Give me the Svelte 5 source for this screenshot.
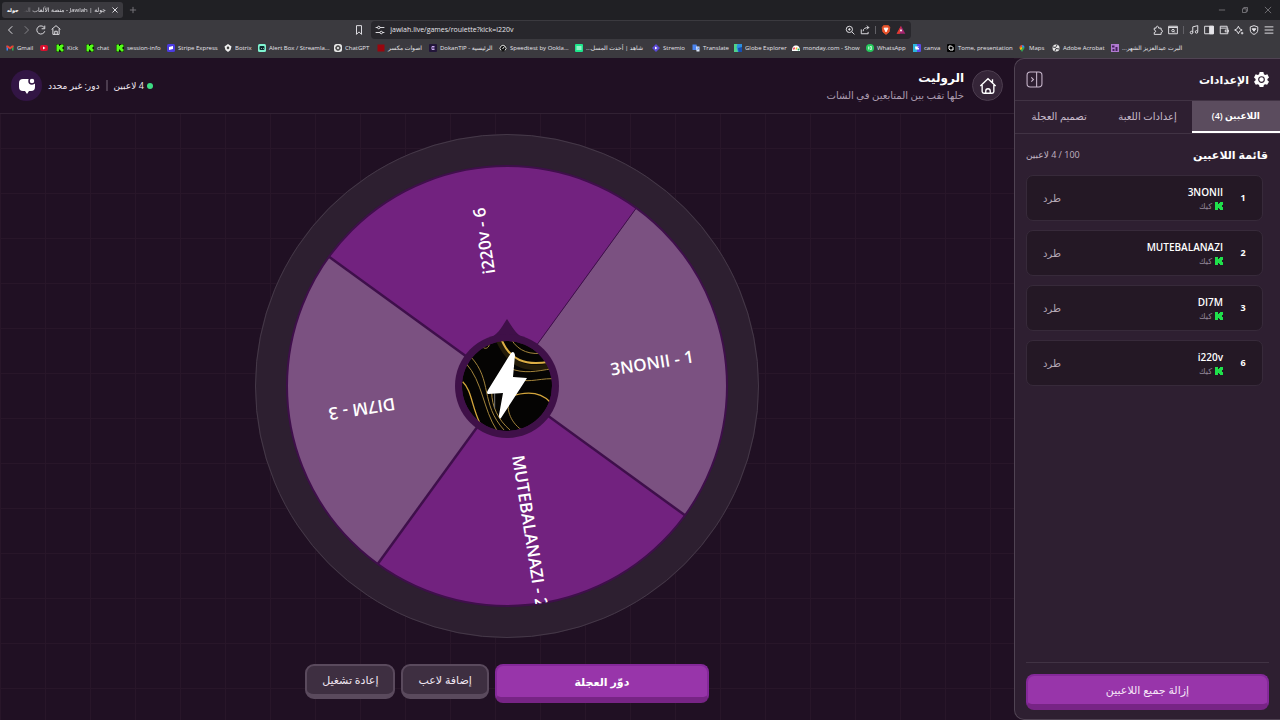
<script lang="ts">
	interface Bookmark {
		label: string;
		icon: string;
		color: string;
		width: number;
		rtl?: boolean;
	}

	const bookmarks: Bookmark[] = [
		{ label: 'Gmail', icon: 'gmail', color: '#e94235', width: 34 },
		{ label: '', icon: 'play', color: '#d8102e', width: 16 },
		{ label: 'Kick', icon: 'kick', color: '#53fc18', width: 30 },
		{ label: 'chat', icon: 'kick', color: '#53fc18', width: 30 },
		{ label: 'session-info', icon: 'kick', color: '#53fc18', width: 51 },
		{ label: 'Stripe Express', icon: 'stripe', color: '#4b3be0', width: 57 },
		{ label: 'Botrix', icon: 'diamond', color: '#f0f0f0', width: 34 },
		{ label: 'Alert Box / Streamla...', icon: 'box', color: '#80f5d2', width: 76 },
		{ label: 'ChatGPT', icon: 'gpt', color: '#e8e8e8', width: 43 },
		{ label: 'اصوات مكسر', icon: 'square', color: '#98060e', width: 52 },
		{ label: 'DokanTIP - الرئيسية', icon: 'dokan', color: '#23163a', width: 70 },
		{ label: 'Speedtest by Ookla...', icon: 'gauge', color: '#e0e0e0', width: 76 },
		{ label: 'شاهد | أحدث المسل...', icon: 'lines', color: '#1ee68c', width: 77, rtl: true },
		{ label: 'Stremio', icon: 'stremio', color: '#5b49d6', width: 40 },
		{ label: 'Translate', icon: 'translate', color: '#4a83ee', width: 42 },
		{ label: 'Globe Explorer', icon: 'globe', color: '#2c8fe0', width: 58 },
		{ label: 'monday.com - Show', icon: 'monday', color: '#ffffff', width: 74 },
		{ label: 'WhatsApp', icon: 'dot', color: '#25c95c', width: 47 },
		{ label: 'canva', icon: 'canva', color: '#5a4be8', width: 34 },
		{ label: 'Tome, presentation', icon: 'tome', color: '#000000', width: 71 },
		{ label: 'Maps', icon: 'pin', color: '#34a853', width: 34 },
		{ label: 'Adobe Acrobat', icon: 'acrobat', color: '#e6e6e6', width: 59 },
		{ label: 'البرت عبدالعزيز الشهر...', icon: 'photo', color: '#b07ad0', width: 72, rtl: true }
	];

	const players = [
		{ id: 1, name: '3NONII' },
		{ id: 2, name: 'MUTEBALANAZI' },
		{ id: 3, name: 'DI7M' },
		{ id: 6, name: 'i220v' }
	];
	const maxPlayers = 100;

	const tabs = [`اللاعبين (${players.length})`, 'إعدادات اللعبة', 'تصميم العجلة'];
	let activeTab = $state(0);

	// wheel geometry
	const radius = 220;
	const labelRadius = 147;
	const rotation = -54;
	const step = 360 / players.length;
	const colors = ['#7b5181', '#72227f'];

	function point(deg: number) {
		const rad = (deg * Math.PI) / 180;
		return `${(radius * Math.cos(rad)).toFixed(2)} ${(radius * Math.sin(rad)).toFixed(2)}`;
	}

	const slices = players.map((player, i) => {
		const start = rotation + i * step;
		return {
			path: `M0 0L${point(start)}A${radius} ${radius} 0 0 1 ${point(start + step)}Z`,
			color: colors[i % 2],
			edge: point(start),
			angle: start + step / 2,
			label: `${player.name} - ${player.id}`
		};
	});
</script>

{#snippet kick()}
	<svg class="kick" viewBox="0 0 8 8" aria-hidden="true">
		<path d="M0 0h3v2h1V1h1V0h3v3H7v2h1v3H5V7H4V6H3v2H0z" fill="#1fe04b" />
	</svg>
{/snippet}

{#snippet favicon(icon: string, color: string)}
	<svg class="favicon" viewBox="0 0 16 16" aria-hidden="true">
		{#if icon === 'gmail'}
			<path d="M1 3v10h3V7z" fill="#4285f4" /><path d="M15 3v10h-3V7z" fill="#34a853" />
			<path d="M1 3h3l4 3 4-3h3v3l-7 5-7-5z" fill={color} />
		{:else if icon === 'play'}
			<rect y="2" width="16" height="12" rx="4" fill={color} /><path d="M6 5l5 3-5 3z" fill="#fff" />
		{:else if icon === 'kick'}
			<rect width="16" height="16" fill="#0d1a08" />
			<path d="M1 1h5v3h2V2h2V1h5v5h-2v4h2v5h-5v-2H8v-2H6v4H1z" fill={color} />
		{:else if icon === 'stripe'}
			<rect width="16" height="16" rx="3" fill={color} /><path d="M4 6l8-2v6l-8 2z" fill="#fff" />
		{:else if icon === 'diamond'}
			<path d="M8 0l7 5-2 7-5 4-5-4-2-7z" fill={color} /><path d="M8 4l3 4-3 3-3-3z" fill="#333" />
		{:else if icon === 'box'}
			<rect width="16" height="16" rx="3" fill={color} />
			<rect x="3" y="4" width="10" height="8" rx="2" fill="#0b2b2c" />
			<path d="M6 9h1M10 9h1" stroke="#fff" stroke-width="2" />
		{:else if icon === 'gpt'}
			<rect width="16" height="16" rx="5" fill={color} />
			<g fill="none" stroke="#444">
				<ellipse cx="8" cy="8" rx="5" ry="3" /><ellipse cx="8" cy="8" rx="5" ry="3" transform="rotate(60 8 8)" />
				<ellipse cx="8" cy="8" rx="5" ry="3" transform="rotate(120 8 8)" />
			</g>
		{:else if icon === 'square'}
			<rect x="1" y="1" width="14" height="14" fill={color} />
		{:else if icon === 'dokan'}
			<rect width="16" height="16" rx="2" fill={color} />
			<path d="M11 5H6v6h5M8 8h3" fill="none" stroke="#c9a8f0" stroke-width="2" />
		{:else if icon === 'gauge'}
			<circle cx="8" cy="8" r="7" fill="#111" />
			<path d="M4 13a6 6 0 1 1 8 0M7 10l4-5" fill="none" stroke={color} stroke-width="2" />
		{:else if icon === 'lines'}
			<rect width="16" height="16" rx="2" fill={color} />
			<path d="M3 6h10M3 10h10" stroke="#fff" stroke-width="2" />
		{:else if icon === 'stremio'}
			<path d="M8 0l8 8-8 8-8-8z" fill={color} /><path d="M6 5l5 3-5 3z" fill="#fff" />
		{:else if icon === 'translate'}
			<path d="M1 1h8l3 11H2a1 1 0 0 1-1-1z" fill={color} /><path d="M8 5h7v10H9z" fill="#dce6f7" />
			<path d="M10 8h4l-3 4" fill="none" stroke="#4a83ee" />
		{:else if icon === 'globe'}
			<path d="M0 0h16v16H0z" fill={color} /><path d="M0 0h7l-2 7 3 9H0z" fill="#4fd38a" />
			<path d="M8 8l8-2v10H9z" fill="#174fb0" />
		{:else if icon === 'monday'}
			<path d="M0 14C0 6 3 3 8 3s8 3 8 11z" fill={color} />
			<path d="M3 11l2-4" stroke="#e8304f" stroke-width="3" /><path d="M8 11l2-4" stroke="#f5b623" stroke-width="3" />
			<circle cx="13" cy="11" r="2" fill="#16b56b" />
		{:else if icon === 'dot'}
			<circle cx="8" cy="8" r="8" fill={color} /><path d="M5 5v6M8 5h3v6H8z" fill="none" stroke="#d9ffe6" />
		{:else if icon === 'canva'}
			<rect width="16" height="16" rx="2" fill={color} /><path d="M0 0h8v16H0z" fill="#2ab6dc" />
			<path d="M4 5h8l-3 3h3v3H5z" fill="#fff" />
		{:else if icon === 'tome'}
			<rect width="16" height="16" rx="2" fill={color} />
			<path d="M4 4h5l3 3v5H6L4 10z" fill="none" stroke="#fff" stroke-width="2" />
		{:else if icon === 'pin'}
			<path d="M8 16L3 8a5 5 0 1 1 10 0z" fill={color} /><path d="M3 8a5 5 0 0 1 5-6v4z" fill="#ea4335" />
			<path d="M8 2a5 5 0 0 1 5 4L9 8z" fill="#4285f4" /><path d="M3 8l5-2v4l-3 2z" fill="#fbbc04" />
		{:else if icon === 'acrobat'}
			<circle cx="8" cy="8" r="7" fill={color} />
			<path d="M2 6l5 1 3-5M6 14l2-5 6 1" fill="none" stroke="#3b3a3f" stroke-width="2" />
		{:else}
			<rect width="16" height="16" fill={color} />
			<path d="M2 3h5v4H2zM9 6h4v8H9zM3 10h4v4H3z" fill="#47215f" />
		{/if}
	</svg>
{/snippet}

<div class="window">
	<header class="browser">
		<div class="strip">
			<div class="browser-tab">
				<span class="tab-logo">جوله</span>
				<span class="tab-title" dir="rtl">جولة | Jawlah - منصة الألعاب الت</span>
				<button aria-label="Close tab">
					<svg viewBox="0 0 16 16"><path d="M4 4l8 8M12 4l-8 8" /></svg>
				</button>
			</div>
			<button class="new-tab" aria-label="New tab">
				<svg viewBox="0 0 16 16"><path d="M8 3v10M3 8h10" /></svg>
			</button>
			<div class="window-buttons">
				<button aria-label="Minimize"><svg viewBox="0 0 16 16"><path d="M3 8h10" /></svg></button>
				<button aria-label="Restore">
					<svg viewBox="0 0 16 16"><path d="M4 6h6v6H4zM6 6V4h6v6h-2" /></svg>
				</button>
				<button aria-label="Close"><svg viewBox="0 0 16 16"><path d="M3 3l10 10M13 3L3 13" /></svg></button>
			</div>
		</div>

		<div class="toolbar">
			<nav class="nav" aria-label="Navigation">
				<button aria-label="Back"><svg viewBox="0 0 16 16"><path d="M10 2L4 8l6 6" /></svg></button>
				<button class="faded" aria-label="Forward"><svg viewBox="0 0 16 16"><path d="M6 2l6 6-6 6" /></svg></button>
				<button aria-label="Reload">
					<svg viewBox="0 0 16 16"><path d="M13 4a6.5 6.5 0 1 0 1 6M14 1v5H9" /></svg>
				</button>
				<button aria-label="Home">
					<svg viewBox="0 0 16 16"><path d="M1 7l7-6 7 6M3 6v9h10V6M6 15v-5h4v5" /></svg>
				</button>
			</nav>
			<div class="address">
				<button aria-label="Bookmark"><svg viewBox="0 0 16 16"><path d="M4 1h8v14l-4-4-4 4z" /></svg></button>
				<div class="url">
					<svg viewBox="0 0 16 16"><path d="M1 4h3M8 4h7M1 12h7M12 12h3" /><circle cx="6" cy="4" r="2" /><circle cx="10" cy="12" r="2" /></svg>
					<input aria-label="Address" value="jawlah.live/games/roulette?kick=i220v" />
					<button aria-label="Zoom">
						<svg viewBox="0 0 16 16"><circle cx="7" cy="7" r="5" /><path d="M11 11l4 4M5 7h4M7 5v4" /></svg>
					</button>
					<button aria-label="Share">
						<svg viewBox="0 0 16 16"><path d="M2 7v7h11v-3M5 10c0-4 3-6 9-6M11 1l3 3-3 3" /></svg>
					</button>
					<span class="divider"></span>
					<button aria-label="Shields">
						<svg viewBox="0 0 16 16">
							<path d="M4 1h8l2 3-1 7-5 4-5-4-1-7z" fill="#e8532b" stroke="#e8532b" />
							<path d="M5 5h6l-3 6z" fill="#fff" stroke="#fff" />
						</svg>
					</button>
					<button aria-label="Rewards">
						<svg viewBox="0 0 16 16">
							<path d="M8 1l7 13H1z" fill="#a3246e" stroke="none" /><path d="M8 1L1 14h5z" fill="#e33b2a" stroke="none" />
							<path d="M8 6l2 4H6z" fill="#fff" stroke="none" />
						</svg>
					</button>
				</div>
			</div>
			<div class="tools">
				<button aria-label="Extensions">
					<svg viewBox="0 0 16 16"><path d="M2 5h3c-1-4 5-4 4 0h4v3c3 0 3 4 0 4v3H2v-3c3 0 3-4 0-4z" /></svg>
				</button>
				<button aria-label="Search tabs">
					<svg viewBox="0 0 16 16"><path d="M1 2h14v12H1zM1 4h14" /><circle cx="8" cy="9" r="2" /><path d="M9 10l2 2" /></svg>
				</button>
				<span class="divider"></span>
				<button aria-label="Media">
					<svg viewBox="0 0 16 16"><path d="M6 12V3l8-2v9" /><circle cx="4" cy="12" r="2" /><circle cx="12" cy="11" r="2" /></svg>
				</button>
				<button aria-label="Sidebar">
					<svg viewBox="0 0 16 16"><path d="M1 2h14v12H1z" /><path d="M9 2h6v12H9z" fill="currentColor" /></svg>
				</button>
				<button aria-label="Wallet">
					<svg viewBox="0 0 16 16"><path d="M13 5V2H2v12h12V5H2M15 8h-5v3h5z" /></svg>
				</button>
				<button aria-label="Assistant">
					<svg viewBox="0 0 16 16"><path d="M7 2l2 4 4 2-4 2-2 4-2-4-4-2 4-2zM13 11v4M11 13h4" /></svg>
				</button>
				<button aria-label="VPN">
					<svg viewBox="0 0 16 16"><path d="M8 1l6 2v5c0 4-3 6-6 7-3-1-6-3-6-7V3z" /><path d="M5 6h6l-3 4z" fill="currentColor" /></svg>
				</button>
				<button aria-label="Menu"><svg viewBox="0 0 16 16"><path d="M1 3h14M1 8h14M1 13h14" /></svg></button>
			</div>
		</div>

		<nav class="bookmarks" aria-label="Bookmarks">
			{#each bookmarks as bookmark}
				<a href="#bookmark" style="flex-basis: {bookmark.width}px;" aria-label={bookmark.label || 'YouTube'}>
					{@render favicon(bookmark.icon, bookmark.color)}
					<span dir={bookmark.rtl ? 'rtl' : 'ltr'}>{bookmark.label}</span>
				</a>
			{/each}
		</nav>
	</header>

	<div class="app" dir="rtl">
		<aside class="sidebar">
			<div class="sidebar-header">
				<h2>
					<svg viewBox="0 0 16 16" aria-hidden="true">
						<path
							d="M6 0h4l.6 2.3 1.4.8 2.3-.7 1.7 3.4L14.300 7.500v1.200L16 10.400l-2 3.300-2.200-.6-1.300.8L10 16H6l-.6-2.100-1.300-.8-2.200.6-1.900-3.300 1.700-1.700V7.400L0 5.800l1.800-3.400 2.300.7 1.300-.8z"
							fill="#fff"
						/>
						<circle cx="8" cy="8" r="3" fill="none" stroke="#2e1f31" stroke-width="1.200" />
					</svg>
					الإعدادات
				</h2>
				<button class="collapse" aria-label="إخفاء">
					<svg viewBox="0 0 16 16"><rect x="1" y="1" width="14" height="14" rx="3" /><path d="M10 1v14M5 6l2 2-2 2" /></svg>
				</button>
			</div>

			<div class="tabs" role="tablist">
				{#each tabs as tab, i}
					<button role="tab" class:active={activeTab === i} aria-selected={activeTab === i} onclick={() => (activeTab = i)}>
						{tab}
					</button>
				{/each}
			</div>

			<div class="list-header">
				<h3>قائمة اللاعبين</h3>
				<span>{maxPlayers} / {players.length} لاعبين</span>
			</div>

			<ul class="players">
				{#each players as player}
					<li>
						<span class="number">{player.id}</span>
						<div class="player">
							<strong>{player.name}</strong>
							<span class="platform">{@render kick()}كيك</span>
						</div>
						<button>طرد</button>
					</li>
				{/each}
			</ul>

			<div class="sidebar-footer">
				<button class="primary">إزالة جميع اللاعبين</button>
			</div>
		</aside>

		<main class="game">
			<div class="game-header">
				<a class="round home" href="#home" aria-label="الرئيسية">
					<svg viewBox="0 0 20 20">
						<path d="M1.500 10L10 2l8.500 8M15 6V2.500M3.500 9v7q0 2 2 2h9q2 0 2-2V9M7.500 18v-2.500a2.500 2.500 0 0 1 5 0V18" />
					</svg>
				</a>
				<div class="title">
					<h1>الروليت</h1>
					<p>خلها تقب بين المتابعين في الشات</p>
				</div>
				<div class="status">
					<span class="online"></span>
					<span>{players.length} لاعبين</span>
					<span class="separator"></span>
					<span>دور: غير محدد</span>
				</div>
				<button class="round chat" aria-label="الشات">
					<svg viewBox="0 0 16 16">
						<path d="M4 1h8q4 0 4 4v4q0 4-4 4h-2l-2 3-2-3H4q-4 0-4-4V5q0-4 4-4z" fill="#fff" />
						<circle cx="13" cy="3" r="3" fill="#fff" stroke="#321544" stroke-width="1.500" />
					</svg>
				</button>
			</div>

			<div class="stage">
				<svg class="wheel" viewBox="-252 -252 504 504" direction="ltr" role="img" aria-label="الروليت">
					<defs>
						<clipPath id="wheel-clip"><circle r={radius} /></clipPath>
						<clipPath id="hub-clip"><circle r="45" /></clipPath>
					</defs>
					<circle r="252" fill="#2d1f30" />
					<circle r="251.500" fill="none" stroke="#453848" />
					{#each slices as slice}
						<path d={slice.path} fill={slice.color} />
					{/each}
					{#each slices as slice, i}
						<path d="M0 0L{slice.edge}" stroke="#3f0f4b" stroke-width={i === 0 ? 1 : 2.5} />
					{/each}
					<circle r={radius} fill="none" stroke="#3f0f4b" stroke-width="2" />
					<g clip-path="url(#wheel-clip)">
						{#each slices as slice}
							<text class="label" x={labelRadius} y="6" transform="rotate({slice.angle})">{slice.label}</text>
						{/each}
					</g>
					<path d="M0-67C4-61 8-53 15-49H-15C-8-53-4-61 0-67z" fill="#3f1048" />
					<circle r="52" fill="#3f1048" />
					<g clip-path="url(#hub-clip)">
						<circle r="45" fill="#050403" />
						<g transform="scale(.3333) translate(-231 -258)" fill="none" stroke="#a4853c" stroke-width="3">
							<path d="M205 120C235 185 275 215 360 198" stroke="#6b5217" stroke-width="16" opacity=".3" />
							<path d="M215 120C240 180 285 198 358 185" stroke="#dcae45" stroke-width="6" />
							<path d="M245 120C265 152 300 168 350 157" />
							<path d="M240 205C280 222 320 214 366 206M246 232C290 252 320 236 366 236" />
							<path d="M240 290C275 278 325 268 360 306" stroke="#d3a53c" stroke-width="4" />
							<path d="M155 138C165 150 175 145 178 134" />
							<path d="M108 190C158 245 160 330 200 390M122 170C188 240 150 310 222 390" />
							<path d="M98 245C125 270 125 320 150 370" stroke="#d3a53c" stroke-width="4" />
							<path d="M185 275C185 320 205 360 240 390M240 285C225 325 240 365 275 390" />
							<path d="M194 280v45" stroke="#777" />
						</g>
						<path d="M4-33Q7-36 8-31L6-9 20-8-6 32Q-8 34-8 29L-4 7-19 8Q-21 7-19 4z" fill="#fff" />
					</g>
				</svg>
			</div>

			<div class="controls">
				<button class="primary spin">دوّر العجلة</button>
				<button class="secondary">إضافة لاعب</button>
				<button class="secondary">إعادة تشغيل</button>
			</div>
		</main>
	</div>
</div>

<style>
	:global(body) {
		margin: 0;
		background: #201023;
	}

	.window {
		min-height: 100vh;
		display: flex;
		flex-direction: column;
		font-family: 'Open Sans', 'DejaVu Sans', sans-serif;
		color: #fff;
	}
	.window * {
		box-sizing: border-box;
	}
	button,
	input {
		font: inherit;
		color: inherit;
		background: none;
		border: 0;
		padding: 0;
	}
	h1,
	h2,
	h3,
	p,
	ul {
		margin: 0;
		padding: 0;
	}

	/* browser */
	.browser {
		font-size: 6px;
		line-height: 10px;
		color: #e6e5ea;
		background: #3b3a3f;
		height: 58px;
	}
	.browser button {
		display: flex;
	}
	.browser svg {
		width: 10px;
		height: 10px;
		flex: none;
		fill: none;
		stroke: currentColor;
		stroke-width: 1.5;
	}
	.browser .favicon {
		width: 8px;
		height: 8px;
		stroke: none;
	}
	.strip {
		height: 20px;
		background: #202024;
		display: flex;
		align-items: center;
		padding: 0 7px 0 2px;
		gap: 5px;
	}
	.browser-tab {
		width: 121px;
		height: 16px;
		padding: 0 3px 0 5px;
		border-radius: 3px;
		background: #3b3a3f;
		display: flex;
		align-items: center;
		gap: 4px;
	}
	.tab-logo {
		font-size: 5px;
		font-weight: 700;
		color: #fff;
	}
	.tab-title {
		flex: 1;
		min-width: 0;
		white-space: nowrap;
		mask-image: linear-gradient(to right, transparent, #000 16px);
	}
	.new-tab {
		color: #77767c;
	}
	.window-buttons {
		margin-left: auto;
		display: flex;
		gap: 13px;
		color: #9a999e;
	}
	.window-buttons svg {
		stroke-width: 1;
	}
	.toolbar {
		height: 20px;
		display: grid;
		grid-template-columns: minmax(0, 49fr) 557px minmax(0, 51fr);
		align-items: center;
	}
	.nav,
	.tools {
		display: flex;
		align-items: center;
		gap: 5px;
		padding: 0 6px;
	}
	.tools {
		justify-content: flex-end;
	}
	.faded {
		opacity: 0.45;
	}
	.divider {
		width: 1px;
		height: 8px;
		background: #626167;
	}
	.address {
		display: flex;
		align-items: center;
		gap: 7px;
	}
	.url {
		flex: 1;
		height: 18px;
		padding: 0 5px 0 4px;
		border-radius: 4px;
		background: #28272c;
		display: flex;
		align-items: center;
		gap: 5px;
	}
	.url input {
		flex: 1;
		min-width: 0;
		outline: 0;
		font-size: 7px;
	}
	.bookmarks {
		height: 16px;
		padding-left: 6px;
		display: flex;
		align-items: center;
		font-weight: 500;
	}
	.bookmarks a {
		flex: none;
		display: flex;
		align-items: center;
		gap: 3px;
		color: inherit;
		text-decoration: none;
		white-space: nowrap;
	}

	/* app */
	.app {
		flex: 1;
		min-height: 0;
		display: flex;
		font-size: 9px;
		line-height: 16px;
		background-color: #201023;
		background-image: linear-gradient(#281629 1px, transparent 1px), linear-gradient(to left, transparent 44px, #281629 44px);
		background-size: 45px 45px;
	}
	.sidebar {
		width: 266px;
		flex: none;
		display: flex;
		flex-direction: column;
		background: #2e1f31;
		border: 1px solid #504353;
		border-right: 0;
		border-start-end-radius: 10px;
		border-end-end-radius: 10px;
	}
	.sidebar-header {
		height: 42px;
		padding: 0 11px;
		display: flex;
		align-items: center;
		justify-content: space-between;
		border-bottom: 1px solid #413344;
	}
	h2 {
		display: flex;
		align-items: center;
		gap: 5px;
		font-size: 11px;
	}
	h2 svg {
		width: 15px;
		height: 15px;
	}
	.collapse {
		display: flex;
		color: #c9b8cd;
	}
	.collapse svg {
		width: 17px;
		height: 17px;
		fill: none;
		stroke: currentColor;
	}
	.tabs {
		display: grid;
		grid-template-columns: 1fr 1fr 1fr;
		height: 33px;
		border-bottom: 1px solid #413344;
	}
	.tabs button {
		font-size: 10px;
		color: #c9bccb;
		border-bottom: 2px solid transparent;
	}
	.tabs .active {
		font-size: 9px;
		color: #fff;
		font-weight: 600;
		background: #5b4c5e;
		border-color: #fff;
	}
	.list-header {
		display: flex;
		justify-content: space-between;
		align-items: center;
		padding: 13px 12px 12px 11px;
		color: #c0b3c2;
	}
	h3 {
		font-size: 11px;
		color: #fff;
	}
	.players {
		flex: 1;
		list-style: none;
		padding: 0 17px 0 11px;
		display: flex;
		flex-direction: column;
		gap: 9px;
	}
	.players li {
		height: 46px;
		flex: none;
		display: flex;
		align-items: center;
		padding: 0 10px 0 16px;
		background: #241825;
		border: 1px solid #372a3a;
		border-radius: 7px;
	}
	.number {
		width: 18px;
		text-align: center;
		font-weight: 700;
	}
	.player {
		flex: 1;
		padding: 2px 11px 0 0;
		display: flex;
		flex-direction: column;
	}
	.player strong {
		font-size: 10px;
		font-weight: 600;
		line-height: 14px;
	}
	.platform {
		display: flex;
		align-items: center;
		gap: 3px;
		font-size: 8px;
		line-height: 14px;
		color: #96899a;
	}
	.kick {
		width: 8px;
		height: 8px;
	}
	.players button {
		font-size: 10px;
		color: #b3a7b5;
	}
	.sidebar-footer {
		margin: 0 11px;
		padding: 11px 0 9px;
		border-top: 1px solid #413344;
	}
	.primary {
		background: #9835aa;
		border: 2px solid #85299a;
		border-bottom: 6px solid #772485;
		border-radius: 8px;
	}
	.sidebar-footer .primary {
		width: 100%;
		height: 36px;
		font-size: 11px;
		color: #f6e6f8;
	}

	.game {
		flex: 1;
		min-width: 0;
		display: flex;
		flex-direction: column;
	}
	.game-header {
		height: 56px;
		padding: 0 11px;
		display: flex;
		align-items: center;
		background: #201023;
		border-bottom: 1px solid #312133;
	}
	.round {
		width: 31px;
		height: 31px;
		border-radius: 50%;
		display: flex;
		align-items: center;
		justify-content: center;
	}
	.home {
		color: #fff;
		background: #352538;
		border: 1px solid #4c3d4f;
	}
	.home svg {
		width: 18px;
		height: 18px;
		fill: none;
		stroke: currentColor;
		stroke-width: 1.5;
	}
	.chat {
		background: #321544;
	}
	.chat svg {
		width: 16px;
		height: 16px;
	}
	.title {
		padding-right: 8px;
	}
	h1 {
		font-size: 12px;
		line-height: 18px;
	}
	.title p {
		font-size: 10px;
		color: #ac9db0;
	}
	.status {
		margin-right: auto;
		padding-left: 6px;
		display: flex;
		align-items: center;
		color: #f0e8f1;
	}
	.online {
		width: 6px;
		height: 6px;
		margin-left: 3px;
		border-radius: 50%;
		background: #3ddc84;
	}
	.separator {
		width: 2px;
		height: 11px;
		margin: 0 6px;
		background: #4b3c4e;
	}
	.stage {
		flex: 1;
		min-height: 0;
		padding: 20px 0 26px;
		display: flex;
		justify-content: center;
	}
	.wheel {
		width: 100%;
		max-width: 504px;
	}
	.label {
		font-size: 17px;
		font-weight: 600;
		text-anchor: middle;
		fill: #fff;
	}
	.controls {
		display: flex;
		justify-content: center;
		align-items: flex-start;
		gap: 6px;
		padding-bottom: 17px;
	}
	.spin {
		width: 214px;
		height: 39px;
		font-size: 11px;
		font-weight: 700;
	}
	.secondary {
		min-width: 86px;
		height: 35px;
		padding: 0 15px;
		font-size: 11px;
		color: #f0e6f1;
		background: #3e2f41;
		border: 2px solid #5a4a5d;
		border-bottom-width: 5px;
		border-radius: 9px;
	}
</style>
